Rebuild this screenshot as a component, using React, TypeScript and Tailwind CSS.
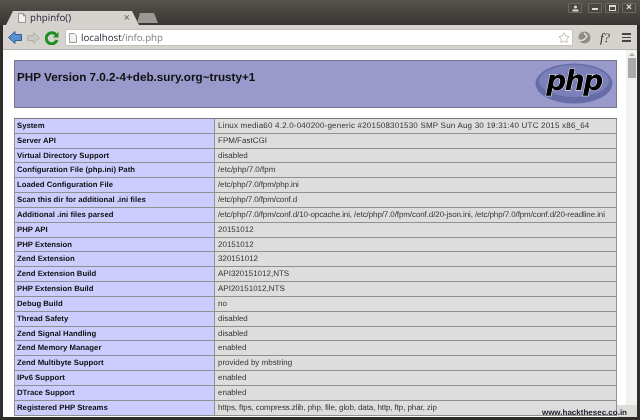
import { Star } from "lucide-react";

const rows = [
  ["System", "Linux media60 4.2.0-040200-generic #201508301530 SMP Sun Aug 30 19:31:40 UTC 2015 x86_64", "tracking-[0.2px]"],
  ["Server API", "FPM/FastCGI", ""],
  ["Virtual Directory Support", "disabled", ""],
  ["Configuration File (php.ini) Path", "/etc/php/7.0/fpm", ""],
  ["Loaded Configuration File", "/etc/php/7.0/fpm/php.ini", "tracking-[-0.1px]"],
  ["Scan this dir for additional .ini files", "/etc/php/7.0/fpm/conf.d", "tracking-[-0.1px]"],
  ["Additional .ini files parsed", "/etc/php/7.0/fpm/conf.d/10-opcache.ini, /etc/php/7.0/fpm/conf.d/20-json.ini, /etc/php/7.0/fpm/conf.d/20-readline.ini", "tracking-[-0.1px]"],
  ["PHP API", "20151012", ""],
  ["PHP Extension", "20151012", ""],
  ["Zend Extension", "320151012", ""],
  ["Zend Extension Build", "API320151012,NTS", ""],
  ["PHP Extension Build", "API20151012,NTS", ""],
  ["Debug Build", "no", ""],
  ["Thread Safety", "disabled", ""],
  ["Zend Signal Handling", "disabled", ""],
  ["Zend Memory Manager", "enabled", ""],
  ["Zend Multibyte Support", "provided by mbstring", ""],
  ["IPv6 Support", "enabled", ""],
  ["DTrace Support", "enabled", ""],
  ["Registered PHP Streams", "https, ftps, compress.zlib, php, file, glob, data, http, ftp, phar, zip", "tracking-[-0.1px]"],
];

function WinButton({ children }: { children: React.ReactNode }) {
  return (
    <div className="w-[14px] h-[10px] rounded-[1px] border border-[#6b6960] bg-[#4a4843] flex items-center justify-center">
      {children}
    </div>
  );
}

function PhpLogo() {
  return (
    <svg width="78" height="41" viewBox="0 0 78 41" className="shrink-0">
      <ellipse cx="39" cy="20.5" rx="38.5" ry="20" fill="#666ca6" />
      <ellipse cx="39" cy="18" rx="35" ry="16" fill="#7b81b8" />
      <text
        x="39"
        y="27"
        textAnchor="middle"
        fontFamily="'DejaVu Sans', sans-serif"
        fontWeight="700"
        fontStyle="italic"
        fontSize="28"
        letterSpacing="-1.5"
        fill="#000"
        stroke="#fff"
        strokeWidth="0.8"
        paintOrder="stroke"
      >
        php
      </text>
    </svg>
  );
}

export default function App() {
  return (
    <div className="w-[640px] h-[420px] bg-[#2e2d2a] flex flex-col overflow-hidden relative font-['Liberation_Sans',sans-serif] [text-rendering:geometricPrecision] blur-[0.3px]">
      {/* title bar */}
      <div className="h-[25px] shrink-0 bg-gradient-to-b from-[#55534d] to-[#383733] flex items-end pl-[6px] pr-[4px]">
        <div className="w-[133px] h-[14px] bg-[#d6d3ce] [clip-path:polygon(0_100%,7px_0,calc(100%-7px)_0,100%_100%)] flex items-center pl-[12px] pr-[9px] gap-[4px]">
          <svg width="8" height="10" viewBox="0 0 9 11" className="shrink-0">
            <path d="M0.5 0.5H6L8.5 3V10.5H0.5Z M6 0.5V3H8.5" fill="#f2f2f0" stroke="#8a8a88" />
          </svg>
          <span className="text-[#24243c] text-[9.7px] leading-none font-['Open_Sans',sans-serif]">phpinfo()</span>
          <span className="ml-auto text-[#66645f] text-[11px] leading-none">×</span>
        </div>
        <div className="w-[21px] h-[10px] -ml-[2px] mb-[2px] bg-[#9b9993] [clip-path:polygon(0_100%,3px_0,calc(100%-4px)_0,100%_100%)]" />
        <div className="ml-auto self-start mt-[3px] flex gap-[3px]">
          <div className="w-[14px] h-[10px] rounded-[1px] border border-[#6b6960] bg-[#4a4843] flex items-center justify-center mr-[3px]">
            <svg width="7" height="7" viewBox="0 0 7 7">
              <circle cx="3.5" cy="2" r="1.6" fill="#dcdad5" />
              <rect x="0.5" y="4.5" width="6" height="2" fill="#dcdad5" />
            </svg>
          </div>
          <WinButton>
            <div className="w-[6px] h-[2px] mt-[2px] bg-[#dcdad5]" />
          </WinButton>
          <WinButton>
            <div className="w-[7px] h-[6px] border border-t-2 border-[#dcdad5]" />
          </WinButton>
          <WinButton>
            <span className="text-[#e6e4df] text-[10px] leading-none font-bold">×</span>
          </WinButton>
        </div>
      </div>

      {/* toolbar */}
      <div className="h-[25px] shrink-0 mx-[3px] bg-[#d6d3ce] border-b border-[#b8b5b0] flex items-center pl-[5px] pr-[6px] pt-[1px]">
        <svg width="14" height="13" viewBox="0 0 14 13" className="shrink-0">
          <path d="M0.5 6.5L7 0.5V3.5H13.5V9.5H7V12.5Z" fill="#5d8fd0" stroke="#2e5c9a" />
        </svg>
        <svg width="13" height="12" viewBox="0 0 13 12" className="shrink-0 ml-[5px]">
          <path d="M12.5 6L6.5 0.5V3.5H0.5V8.5H6.5V11.5Z" fill="#c9c8c4" stroke="#b0afab" />
        </svg>
        <svg width="14" height="14" viewBox="0 0 14 14" className="shrink-0 ml-[5px]">
          <path d="M11.5 4.5A5.5 5.5 0 1 0 12 9" fill="none" stroke="#1f8f24" strokeWidth="3" />
          <path d="M8 6.5H13.5V1Z" fill="#1f8f24" />
        </svg>
        <div className="w-[508px] h-[17px] ml-[6px] bg-white rounded-[2px] border border-[#c6c3be] flex items-center pl-[3px] pr-[2px]">
          <svg width="8" height="10" viewBox="0 0 9 11" className="shrink-0">
            <path d="M0.5 0.5H6L8.5 3V10.5H0.5Z" fill="#f4f4f2" stroke="#8e8e8c" />
          </svg>
          <span className="ml-[4px] text-[9.7px] leading-none font-['Open_Sans',sans-serif] text-[#2a2a35]">
            localhost<span className="text-[#80807e]">/info.php</span>
          </span>
          <Star className="ml-auto w-[12px] h-[12px] text-[#a4a4a0]" strokeWidth={1.5} fill="#fff" />
        </div>
        <svg width="13" height="13" viewBox="0 0 13 13" className="shrink-0 ml-[5px]">
          <circle cx="6.5" cy="6.5" r="6" fill="#8f8d88" />
          <path d="M1 9C4 10 7 9 9 5L6 2" fill="none" stroke="#f0efec" strokeWidth="1.2" />
        </svg>
        <span className="ml-[9px] text-[13px] leading-none italic font-['Liberation_Serif',serif] text-[#2e2d2a]">f?</span>
        <div className="ml-auto flex flex-col gap-[2px]">
          <div className="w-[9px] h-[1.5px] bg-[#444]" />
          <div className="w-[9px] h-[1.5px] bg-[#444]" />
          <div className="w-[9px] h-[1.5px] bg-[#444]" />
        </div>
      </div>

      {/* page */}
      <div className="flex-1 min-h-0 flex mx-[3px] mb-[3px] bg-white">
        <div className="flex-1 min-w-0 overflow-hidden pt-[10px] pl-[11px] pr-[9px]">
          <div className="h-[48px] flex justify-between bg-[#9999cc] border border-[#77778f] pl-[2px] pr-[3px] pt-[2px]">
            <h1 className="text-[11.7px] leading-[29px] font-bold text-[#111]">PHP Version 7.0.2-4+deb.sury.org~trusty+1</h1>
            <PhpLogo />
          </div>
          <div className="mt-[10px] border-t border-[#777]">
            {rows.map(([name, value, fit]) => (
              <div key={name} className="flex h-[14.83px] border-b border-l border-r border-[#909090] text-[8px] leading-[14px]">
                <div className="w-[200px] shrink-0 bg-[#ccccff] font-bold text-[7.75px] text-[#111] pl-[2px] border-r border-[#909090] truncate">
                  {name}
                </div>
                <div className={`flex-1 min-w-0 bg-[#dddddd] text-[#333] pl-[3px] whitespace-nowrap overflow-hidden ${fit}`}>
                  {value}
                </div>
              </div>
            ))}
          </div>
        </div>
        <div className="w-[11px] shrink-0 bg-[#f1f1f1] flex flex-col items-center pt-[3px]">
          <div className="w-0 h-0 border-x-[3px] border-x-transparent border-b-[3px] border-b-[#aaa]" />
          <div className="w-[8px] h-[20px] mt-[2px] bg-[#aaa]" />
        </div>
      </div>

      {/* watermark strip */}
      <div className="absolute right-[3px] bottom-[3px] h-[12px] w-[20px] bg-[#dddcd8]" />
      <span className="absolute right-[13px] bottom-[2px] text-[8px] leading-[10px] font-bold text-[#222233]">www.hackthesec.co.in</span>
    </div>
  );
}
